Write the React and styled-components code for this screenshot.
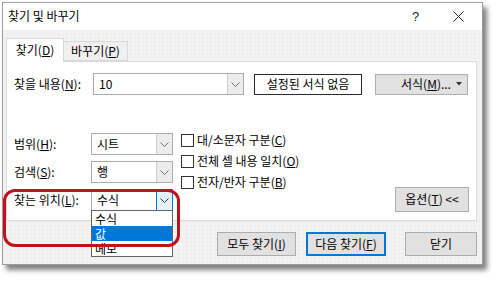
import React from 'react';
import styled, { createGlobalStyle } from 'styled-components';

const GlobalStyle = createGlobalStyle`
  html, body {
    margin: 0;
    padding: 0;
    background: #ffffff;
  }
  body {
    font-family: "Noto Sans CJK KR", "Noto Sans", sans-serif;
    font-size: 12px;
    line-height: 1.2;
    color: #000;
  }
  * {
    box-sizing: border-box;
  }
`;

const Chevron = ({ color = '#6d6d6d' }) => (
  <svg width="9" height="5" viewBox="0 0 9 5">
    <polyline points="0.5,0.5 4.5,4.5 8.5,0.5" fill="none" stroke={color} strokeWidth="1" />
  </svg>
);

const CloseIcon = () => (
  <svg width="11" height="11" viewBox="0 0 11 11">
    <line x1="0.5" y1="0.5" x2="10.5" y2="10.5" stroke="#222" strokeWidth="1" />
    <line x1="10.5" y1="0.5" x2="0.5" y2="10.5" stroke="#222" strokeWidth="1" />
  </svg>
);

const Caret = () => (
  <svg width="6" height="4" viewBox="0 0 6 4">
    <polygon points="0,0 6,0 3,3.5" fill="#333" />
  </svg>
);

const ComboBox = ({ value, width = 82, focused, options, selected }) => (
  <ComboWrap $width={width}>
    <ComboValue>{value}</ComboValue>
    <ComboArrow $focused={focused}>
      <Chevron color={focused ? '#333' : '#6d6d6d'} />
    </ComboArrow>
    {options && (
      <DropList>
        {options.map((opt) => (
          <DropItem key={opt} $active={opt === selected}>{opt}</DropItem>
        ))}
      </DropList>
    )}
  </ComboWrap>
);

const App = () => {
  return (
    <Page>
      <GlobalStyle />
      <Dialog>
        <TitleBar>
          <Title>찾기 및 바꾸기</Title>
          <HelpMark>?</HelpMark>
          <CloseBox>
            <CloseIcon />
          </CloseBox>
        </TitleBar>

        <Body>
          <TabRow>
            <Tab $active>찾기(<U>D</U>)</Tab>
            <Tab>바꾸기(<U>P</U>)</Tab>
          </TabRow>

          <Panel>
            <FindRow>
              <FindLabel>찾을 내용(<U>N</U>):</FindLabel>
              <ComboBox value="10" width={151} />
              <NoFormatButton>설정된 서식 없음</NoFormatButton>
              <FormatButton>
                <span>서식(<U>M</U>)...</span>
                <Caret />
              </FormatButton>
            </FindRow>

            <OptionsArea>
              <OptionGrid>
                <FieldLabel>범위(<U>H</U>):</FieldLabel>
                <ComboBox value="시트" />
                <FieldLabel>검색(<U>S</U>):</FieldLabel>
                <ComboBox value="행" />
                <FieldLabel>찾는 위치(<U>L</U>):</FieldLabel>
                <ComboBox
                  value="수식"
                  focused
                  options={['수식', '값', '메모']}
                  selected="값"
                />
              </OptionGrid>

              <CheckList>
                <CheckRow><CheckBox />대/소문자 구분(<U>C</U>)</CheckRow>
                <CheckRow><CheckBox />전체 셀 내용 일치(<U>O</U>)</CheckRow>
                <CheckRow><CheckBox />전자/반자 구분(<U>B</U>)</CheckRow>
              </CheckList>

              <OptionsButton>옵션(<U>T</U>) &lt;&lt;</OptionsButton>
            </OptionsArea>
          </Panel>

          <Footer>
            <DialogButton $width={79}>모두 찾기(<U>I</U>)</DialogButton>
            <DialogButton $width={80} $default>다음 찾기(<U>F</U>)</DialogButton>
            <DialogButton $width={72} $last>닫기</DialogButton>
          </Footer>
        </Body>

        <Highlight />
      </Dialog>
    </Page>
  );
};

const Page = styled.div`
  width: 500px;
  height: 282px;
  padding: 2px 0 0 2px;
  background: #ffffff;
`;

const Dialog = styled.div`
  position: relative;
  width: 481px;
  height: 263px;
  display: flex;
  flex-direction: column;
  border: 1px solid #9c9c9c;
  background-color: #f0f0f0;
  box-shadow: 4px 5px 5px rgba(0, 0, 0, 0.5);
`;

const TitleBar = styled.div`
  height: 27px;
  display: flex;
  align-items: center;
  padding-left: 5px;
  background: #ffffff;
`;

const Title = styled.div`
  flex: 1;
  font-size: 12px;
  color: #000;
`;

const HelpMark = styled.div`
  width: 12px;
  margin-right: 29px;
  font-family: "Liberation Sans", sans-serif;
  font-size: 13px;
  color: #222;
`;

const CloseBox = styled.div`
  display: flex;
  align-items: center;
  margin-right: 18px;
`;

const Body = styled.div`
  flex: 1;
  display: flex;
  flex-direction: column;
  padding: 8px 5px 8px 3px;
  background-color: #f0f0f0;
  background-image: radial-gradient(rgba(255, 255, 255, 0.75) 0.6px, transparent 0.8px);
  background-size: 4px 4px;
`;

const TabRow = styled.div`
  display: flex;
  align-items: flex-end;
  height: 23px;
  position: relative;
  z-index: 1;
`;

const Tab = styled.div`
  display: flex;
  align-items: center;
  justify-content: center;
  height: ${props => (props.$active ? '24px' : '20px')};
  width: ${props => (props.$active ? '58px' : '64px')};
  margin-bottom: ${props => (props.$active ? '-1px' : '0')};
  background: ${props => (props.$active ? '#ffffff' : '#f0f0f0')};
  border: 1px solid #d9d9d9;
  border-bottom: ${props => (props.$active ? 'none' : '1px solid #d9d9d9')};
  border-left: ${props => (props.$active ? '1px solid #d9d9d9' : 'none')};
  font-size: 12px;
`;

const Panel = styled.div`
  height: 160px;
  display: flex;
  flex-direction: column;
  justify-content: space-between;
  padding: 11px 7px 8px 7px;
  background: #ffffff;
  border: 1px solid #d9d9d9;
`;

const U = styled.span`
  text-decoration: underline;
`;

const FindRow = styled.div`
  display: flex;
  align-items: center;
  height: 22px;
`;

const FindLabel = styled.div`
  width: 79px;
  white-space: nowrap;
`;

const ComboWrap = styled.div`
  position: relative;
  width: ${props => props.$width}px;
  height: 22px;
  display: flex;
  border: 1px solid #acacac;
  background: #ffffff;
`;

const ComboValue = styled.div`
  flex: 1;
  display: flex;
  align-items: center;
  padding-left: 5px;
  font-size: 12px;
`;

const ComboArrow = styled.div`
  display: flex;
  align-items: center;
  justify-content: center;
  width: ${props => (props.$focused ? '17px' : '16px')};
  margin: ${props => (props.$focused ? '-1px -1px -1px 0' : '0')};
  background: ${props => (props.$focused ? '#e5f1fb' : '#ececec')};
  border: ${props => (props.$focused ? '1px solid #0078d7' : 'none')};
  border-left: 1px solid ${props => (props.$focused ? '#0078d7' : '#cfcfcf')};
`;

const DropList = styled.div`
  position: absolute;
  top: 100%;
  left: -1px;
  right: -1px;
  display: flex;
  flex-direction: column;
  border: 1px solid #646464;
  background: #ffffff;
  z-index: 2;
`;

const DropItem = styled.div`
  height: 15px;
  line-height: 15px;
  padding-left: 3px;
  font-size: 12px;
  overflow: hidden;
  background: ${props => (props.$active ? '#0078d7' : '#ffffff')};
  color: ${props => (props.$active ? '#ffffff' : '#000')};
`;

const ButtonBase = styled.div`
  display: flex;
  align-items: center;
  justify-content: center;
  font-size: 12px;
  white-space: nowrap;
`;

const NoFormatButton = styled(ButtonBase)`
  width: 108px;
  height: 21px;
  margin-left: 10px;
  background: #ffffff;
  border: 1px solid #2b2b2b;
`;

const FormatButton = styled(ButtonBase)`
  width: 93px;
  height: 21px;
  margin-left: 13px;
  justify-content: space-between;
  padding: 0 5px 0 25px;
  background: #e1e1e1;
  border: 1px solid #adadad;
`;

const OptionsArea = styled.div`
  display: flex;
  align-items: flex-start;
  height: 79px;
`;

const OptionGrid = styled.div`
  display: grid;
  grid-template-columns: 77px 82px;
  row-gap: 6px;
  align-items: center;
`;

const FieldLabel = styled.div`
  white-space: nowrap;
`;

const CheckList = styled.div`
  display: flex;
  flex-direction: column;
  gap: 8px;
  margin-left: 8px;
  padding-top: 1px;
`;

const CheckRow = styled.div`
  display: flex;
  align-items: center;
  height: 13px;
  white-space: nowrap;
`;

const CheckBox = styled.span`
  width: 13px;
  height: 13px;
  margin-right: 3px;
  border: 1px solid #333;
  background: #ffffff;
`;

const OptionsButton = styled(ButtonBase)`
  margin-left: auto;
  align-self: flex-end;
  width: 74px;
  height: 25px;
  background: #e1e1e1;
  border: 1px solid #adadad;
`;

const Footer = styled.div`
  display: flex;
  justify-content: flex-end;
  padding-top: 11px;
`;

const DialogButton = styled(ButtonBase)`
  width: ${props => props.$width}px;
  height: 24px;
  margin-right: ${props => (props.$last ? 0 : props.$default ? 19 : 10)}px;
  background: #e1e1e1;
  border: ${props => (props.$default ? '2px solid #0078d7' : '1px solid #adadad')};
`;

const Highlight = styled.div`
  position: absolute;
  left: 0;
  top: 186px;
  width: 177px;
  height: 58px;
  border: 3px solid #c0121b;
  border-radius: 12px;
  z-index: 3;
  pointer-events: none;
`;

export default App;
